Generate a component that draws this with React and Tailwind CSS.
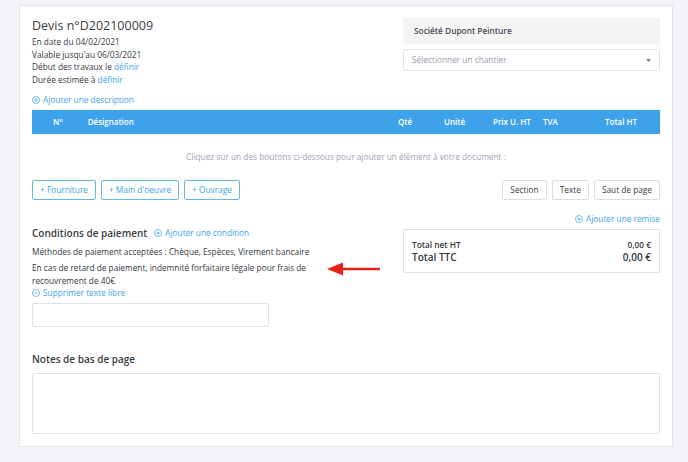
import React from "react";

const PlusCircle = () => (
  <svg width="8" height="8" viewBox="0 0 10 10" className="inline-block shrink-0" fill="none" stroke="currentColor" strokeWidth="0.9">
    <circle cx="5" cy="5" r="4.4" />
    <path d="M5 2.7v4.6M2.7 5h4.6" />
  </svg>
);
const MinusCircle = () => (
  <svg width="8" height="8" viewBox="0 0 10 10" className="inline-block shrink-0" fill="none" stroke="currentColor" strokeWidth="0.9">
    <circle cx="5" cy="5" r="4.4" />
    <path d="M2.7 5h4.6" />
  </svg>
);

export default function App() {
  return (
    <div className="w-[688px] h-[462px] bg-[#f3f4f8] pt-[5px] pl-[19px] text-[#34363e]" style={{ fontFamily: '"Open Sans", sans-serif' }}>
      <div className="w-[654px] h-[442px] bg-white border border-[#e4e6ec] px-[12px] pt-[12px]">
        <div className="flex justify-between">
          <div>
            <h1 className="text-[12.5px] leading-[16px] text-[#3a3c44]">Devis n°D202100009</h1>
            <div className="text-[8.3px] leading-[12.5px] mt-[2px]">
              <div>En date du 04/02/2021</div>
              <div>Valable jusqu'au 06/03/2021</div>
              <div>Début des travaux le <span className="text-[#3ea2ea]">définir</span></div>
              <div>Durée estimée à <span className="text-[#3ea2ea]">définir</span></div>
            </div>
            <div className="mt-[8px] text-[8.3px] leading-[12px] text-[#3ea2ea] flex items-center gap-[3px]">
              <PlusCircle />
              <span>Ajouter une description</span>
            </div>
          </div>
          <div className="w-[257px]">
            <div className="h-[26px] bg-[#f4f4f5] rounded-[2px] flex items-center px-[11px] text-[8.3px] font-semibold text-[#4a4c54]">
              Société Dupont Peinture
            </div>
            <div className="mt-[5px] h-[22px] border border-[#e0e2e6] rounded-[2px] flex items-center justify-between px-[8px] text-[8.3px] text-[#9a9cab]">
              <span>Sélectionner un chantier</span>
              <svg width="5" height="3" viewBox="0 0 6 4"><path d="M0 0h6L3 4z" fill="#777" /></svg>
            </div>
          </div>
        </div>

        <div className="mt-[4px] h-[24px] bg-[#3ea2ea] text-white text-[8px] font-semibold flex items-center">
          <span className="ml-[21px]">N°</span>
          <span className="ml-[25px]">Désignation</span>
          <span className="ml-auto w-[46px]">Qté</span>
          <span className="w-[49px]">Unité</span>
          <span className="w-[50px]">Prix U. HT</span>
          <span className="w-[62px]">TVA</span>
          <span className="w-[55px]">Total HT</span>
        </div>

        <div className="mt-[17px] text-center text-[8.3px] leading-[12px] text-[#9ea2b4]">
          Cliquez sur un des boutons ci-dessous pour ajouter un élément à votre document :
        </div>

        <div className="mt-[17px] flex items-center">
          <div className="flex gap-[5px] text-[8.3px] text-[#3ea2ea]">
            <button className="h-[20px] px-[7px] border border-[#6ab4ec] rounded-[2px]">+ Fourniture</button>
            <button className="h-[20px] px-[7px] border border-[#6ab4ec] rounded-[2px]">+ Main d'oeuvre</button>
            <button className="h-[20px] px-[7px] border border-[#6ab4ec] rounded-[2px]">+ Ouvrage</button>
          </div>
          <div className="ml-auto flex gap-[5px] text-[8.3px] text-[#3a3c44]">
            <button className="h-[20px] px-[7px] border border-[#dcdde0] rounded-[2px]">Section</button>
            <button className="h-[20px] px-[7px] border border-[#dcdde0] rounded-[2px]">Texte</button>
            <button className="h-[20px] px-[7px] border border-[#dcdde0] rounded-[2px]">Saut de page</button>
          </div>
        </div>

        <div className="relative flex justify-between">
          <div className="w-[300px] pt-[26px]">
            <div className="flex items-center gap-[7px] h-[14px]">
              <span className="text-[10px] font-semibold text-[#3a3c44]">Conditions de paiement</span>
              <span className="text-[8.3px] text-[#3ea2ea] flex items-center gap-[3px]"><PlusCircle />Ajouter une condition</span>
            </div>
            <div className="mt-[6px] text-[8.3px] leading-[12.5px]">
              <div>Méthodes de paiement acceptées : Chèque, Espèces, Virement bancaire</div>
              <div className="mt-[3.5px]">En cas de retard de paiement, indemnité forfaitaire légale pour frais de recouvrement de 40€</div>
              <div className="text-[#3ea2ea] flex items-center gap-[3px]"><MinusCircle />Supprimer texte libre</div>
            </div>
            <div className="mt-[3px] w-[237px] h-[24px] border border-[#e0e2e6] rounded-[2px]" />
          </div>
          <svg className="absolute left-[295px] top-[61px]" width="54" height="16" viewBox="0 0 54 16">
            <path d="M14 8H53" stroke="#e8231d" strokeWidth="2.5" />
            <path d="M0 8L16 1.5V14.5Z" fill="#e8231d" />
          </svg>
          <div className="w-[257px] pt-[13px]">
            <div className="h-[12px] text-[8.3px] text-[#3ea2ea] flex items-center justify-end gap-[3px]"><PlusCircle />Ajouter une remise</div>
            <div className="mt-[4px] h-[44px] border border-[#e0e2e6] rounded-[2px] pl-[8px] pr-[8px] pt-[9px]">
              <div className="flex justify-between text-[8.3px] font-semibold leading-[12px]"><span>Total net HT</span><span>0,00 €</span></div>
              <div className="flex justify-between text-[10px] font-semibold leading-[13px]"><span>Total TTC</span><span>0,00 €</span></div>
            </div>
          </div>
        </div>

        <div className="mt-[26px] h-[14px] flex items-center text-[10px] font-semibold text-[#3a3c44]">Notes de bas de page</div>
        <div className="mt-[6px] h-[61px] border border-[#e0e2e6] rounded-[2px]" />
      </div>
    </div>
  );
}
